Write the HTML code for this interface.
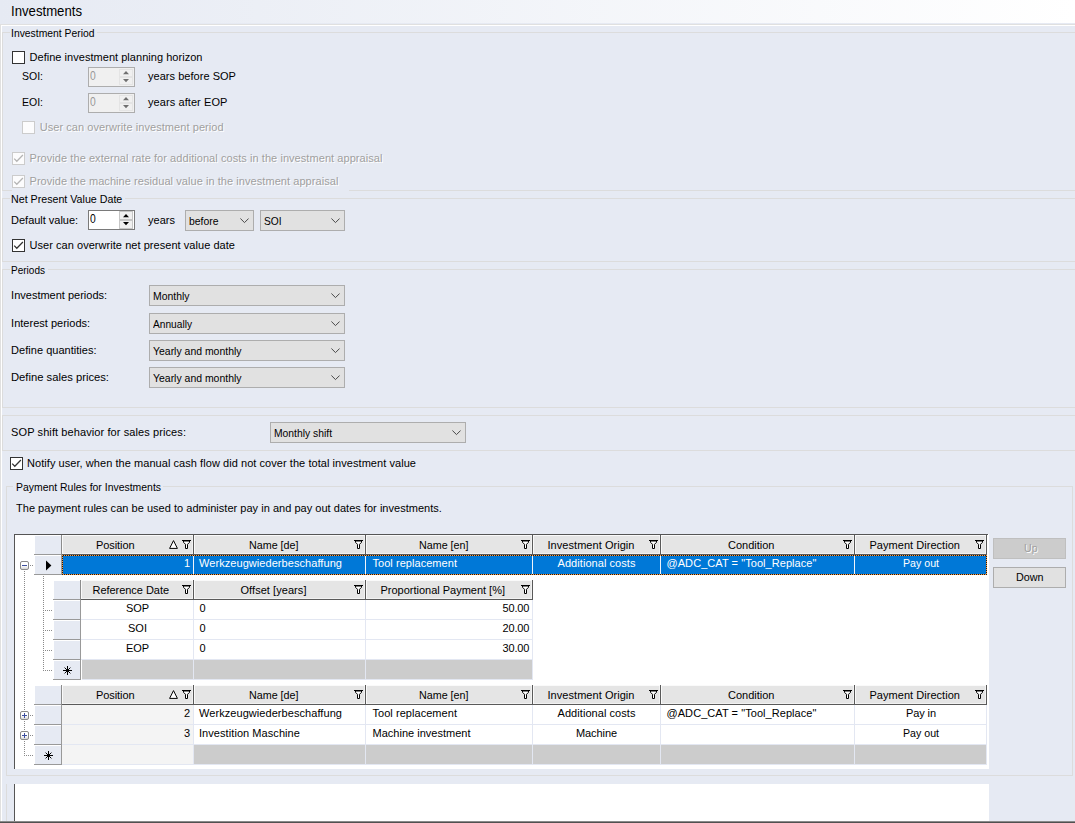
<!DOCTYPE html>
<html lang="en"><head><meta charset="utf-8"><title>Investments</title>
<style>
html,body{margin:0;padding:0;}
body{width:1075px;height:823px;overflow:hidden;background:#e6eaf3;font-family:"Liberation Sans",sans-serif;font-size:11px;color:#000;}
#root{position:relative;width:1075px;height:823px;overflow:hidden;background:#e6eaf3;}
#root div,#root span.t,#root svg{position:absolute;box-sizing:border-box;}
span.t{white-space:pre;}
span.dis{color:#a0a0a0;text-shadow:1px 1px 0 #fff;}

</style></head>
<body>
<div id="root">
<div style="left:0px;top:0px;width:1075px;height:23px;background:linear-gradient(90deg,#e6eaf3 0%,#ffffff 100%);"></div>
<span class="t" style="left:11.10px;top:2.65px;font-size:14px;line-height:17px;transform:scaleX(0.9406);transform-origin:0 0;">Investments</span>
<div style="left:0px;top:24px;width:1075px;height:1px;background:#e0e0e0;"></div>
<div style="left:0px;top:24px;width:1px;height:799px;background:#e0e0e0;"></div>
<div style="left:1px;top:25px;width:1074px;height:1px;background:#fff;"></div>
<div style="left:1px;top:25px;width:1px;height:798px;background:#fff;"></div>
<div style="left:2px;top:32px;width:1px;height:159px;background:#dcdcdc;"></div>
<div style="left:2px;top:198px;width:1px;height:64px;background:#dcdcdc;"></div>
<div style="left:2px;top:269px;width:1px;height:139px;background:#dcdcdc;"></div>
<div style="left:2px;top:415px;width:1px;height:36px;background:#dcdcdc;"></div>
<div style="left:2px;top:32px;width:8px;height:1px;background:#dcdcdc;"></div>
<div style="left:97px;top:32px;width:978px;height:1px;background:#dcdcdc;"></div>
<span class="t" style="left:11.10px;top:26.69px;font-size:11px;line-height:13px;transform:scaleX(0.9418);transform-origin:0 0;">Investment Period</span>
<div style="left:12px;top:51px;width:13px;height:13px;border:1px solid #333;background:#fff;"></div>
<span class="t" style="left:29.50px;top:50.69px;font-size:11px;line-height:13px;letter-spacing:0.034px;">Define investment planning horizon</span>
<span class="t" style="left:21.50px;top:69.69px;font-size:11px;line-height:13px;transform:scaleX(0.9539);transform-origin:0 0;">SOI:</span>
<div style="left:88px;top:67px;width:47px;height:20px;border:1px solid #adadad;background:#f0f0f0;"></div>
<div style="left:119px;top:69px;width:14px;height:8px;background:#f0f0f0;border:1px solid #e4e4e4;"></div>
<div style="left:119px;top:77px;width:14px;height:8px;background:#f0f0f0;border:1px solid #e4e4e4;"></div>
<svg style="left:119px;top:69px" width="14" height="16" viewBox="0 0 14 16"><path d="M4 5.2 L7 2 L10 5.2 Z M4 10 L7 13.2 L10 10 Z" fill="#707070"/></svg>
<span class="t" style="left:90.30px;top:68.84px;font-size:12px;line-height:14px;color:#989898;transform:scaleX(0.86);transform-origin:0 0;">0</span>
<span class="t" style="left:148.00px;top:69.69px;font-size:11px;line-height:13px;letter-spacing:0.035px;">years before SOP</span>
<span class="t" style="left:21.50px;top:95.69px;font-size:11px;line-height:13px;transform:scaleX(0.9539);transform-origin:0 0;">EOI:</span>
<div style="left:88px;top:93px;width:47px;height:20px;border:1px solid #adadad;background:#f0f0f0;"></div>
<div style="left:119px;top:95px;width:14px;height:8px;background:#f0f0f0;border:1px solid #e4e4e4;"></div>
<div style="left:119px;top:103px;width:14px;height:8px;background:#f0f0f0;border:1px solid #e4e4e4;"></div>
<svg style="left:119px;top:95px" width="14" height="16" viewBox="0 0 14 16"><path d="M4 5.2 L7 2 L10 5.2 Z M4 10 L7 13.2 L10 10 Z" fill="#707070"/></svg>
<span class="t" style="left:90.30px;top:94.84px;font-size:12px;line-height:14px;color:#989898;transform:scaleX(0.86);transform-origin:0 0;">0</span>
<span class="t" style="left:148.00px;top:95.69px;font-size:11px;line-height:13px;letter-spacing:0.082px;">years after EOP</span>
<div style="left:22px;top:121px;width:13px;height:13px;border:1px solid #cccccc;background:#fcfcfd;"></div>
<span class="t dis" style="left:39.70px;top:120.69px;font-size:11px;line-height:13px;letter-spacing:0.067px;">User can overwrite investment period</span>
<div style="left:12px;top:152px;width:13px;height:13px;border:1px solid #cccccc;background:#fcfcfd;"></div>
<svg style="left:12px;top:152px" width="13" height="13" viewBox="0 0 13 13"><path d="M2.2 6.6 L4.8 9.3 L10.9 3.0" fill="none" stroke="#b4b4b4" stroke-width="1.25"/></svg>
<span class="t dis" style="left:29.50px;top:151.69px;font-size:11px;line-height:13px;letter-spacing:0.060px;">Provide the external rate for additional costs in the investment appraisal</span>
<div style="left:12px;top:175px;width:13px;height:13px;border:1px solid #cccccc;background:#fcfcfd;"></div>
<svg style="left:12px;top:175px" width="13" height="13" viewBox="0 0 13 13"><path d="M2.2 6.6 L4.8 9.3 L10.9 3.0" fill="none" stroke="#b4b4b4" stroke-width="1.25"/></svg>
<span class="t dis" style="left:29.50px;top:174.69px;font-size:11px;line-height:13px;letter-spacing:0.062px;">Provide the machine residual value in the investment appraisal</span>
<div style="left:2px;top:190px;width:10px;height:1px;background:#dcdcdc;"></div>
<div style="left:349px;top:190px;width:726px;height:1px;background:#dcdcdc;"></div>
<div style="left:2px;top:198px;width:8px;height:1px;background:#dcdcdc;"></div>
<div style="left:125px;top:198px;width:950px;height:1px;background:#dcdcdc;"></div>
<span class="t" style="left:11.10px;top:192.69px;font-size:11px;line-height:13px;transform:scaleX(0.9699);transform-origin:0 0;">Net Present Value Date</span>
<span class="t" style="left:11.10px;top:213.69px;font-size:11px;line-height:13px;letter-spacing:-0.019px;">Default value:</span>
<div style="left:88px;top:210px;width:47px;height:20px;border:1px solid #7a7a7a;background:#fff;"></div>
<div style="left:119px;top:211px;width:14px;height:9px;background:#f0f0f0;border:1px solid #c6c6c6;"></div>
<div style="left:119px;top:220px;width:14px;height:9px;background:#f0f0f0;border:1px solid #c6c6c6;"></div>
<svg style="left:119px;top:212px" width="14" height="16" viewBox="0 0 14 16"><path d="M4 5.2 L7 2 L10 5.2 Z M4 10 L7 13.2 L10 10 Z" fill="#000"/></svg>
<span class="t" style="left:90.30px;top:211.84px;font-size:12px;line-height:14px;transform:scaleX(0.86);transform-origin:0 0;">0</span>
<span class="t" style="left:148.00px;top:213.69px;font-size:11px;line-height:13px;letter-spacing:0.019px;">years</span>
<div style="left:185px;top:210px;width:69px;height:21px;border:1px solid #adadad;background:#e1e1e1;"></div>
<span class="t" style="left:188.70px;top:214.69px;font-size:11px;line-height:13px;transform:scaleX(0.9454);transform-origin:0 0;">before</span>
<svg style="left:240px;top:218px" width="9" height="6" viewBox="0 0 9 6"><path d="M0.4 0.5 L4.5 4.6 L8.6 0.5" fill="none" stroke="#484848" stroke-width="1"/></svg>
<div style="left:260px;top:210px;width:85px;height:21px;border:1px solid #adadad;background:#e1e1e1;"></div>
<span class="t" style="left:263.70px;top:214.69px;font-size:11px;line-height:13px;transform:scaleX(0.9286);transform-origin:0 0;">SOI</span>
<svg style="left:331px;top:218px" width="9" height="6" viewBox="0 0 9 6"><path d="M0.4 0.5 L4.5 4.6 L8.6 0.5" fill="none" stroke="#484848" stroke-width="1"/></svg>
<div style="left:12px;top:239px;width:13px;height:13px;border:1px solid #333;background:#fff;"></div>
<svg style="left:12px;top:239px" width="13" height="13" viewBox="0 0 13 13"><path d="M2.2 6.6 L4.8 9.3 L10.9 3.0" fill="none" stroke="#333" stroke-width="1.25"/></svg>
<span class="t" style="left:29.50px;top:238.69px;font-size:11px;line-height:13px;letter-spacing:0.046px;">User can overwrite net present value date</span>
<div style="left:2px;top:261px;width:1073px;height:1px;background:#dcdcdc;"></div>
<div style="left:2px;top:269px;width:8px;height:1px;background:#dcdcdc;"></div>
<div style="left:48px;top:269px;width:1027px;height:1px;background:#dcdcdc;"></div>
<span class="t" style="left:11.10px;top:263.69px;font-size:11px;line-height:13px;transform:scaleX(0.9116);transform-origin:0 0;">Periods</span>
<span class="t" style="left:11.10px;top:288.69px;font-size:11px;line-height:13px;">Investment periods:</span>
<div style="left:149px;top:285px;width:196px;height:21px;border:1px solid #adadad;background:#e1e1e1;"></div>
<span class="t" style="left:152.70px;top:289.69px;font-size:11px;line-height:13px;transform:scaleX(0.9473);transform-origin:0 0;">Monthly</span>
<svg style="left:331px;top:293px" width="9" height="6" viewBox="0 0 9 6"><path d="M0.4 0.5 L4.5 4.6 L8.6 0.5" fill="none" stroke="#484848" stroke-width="1"/></svg>
<span class="t" style="left:11.10px;top:316.69px;font-size:11px;line-height:13px;letter-spacing:0.007px;">Interest periods:</span>
<div style="left:149px;top:313px;width:196px;height:21px;border:1px solid #adadad;background:#e1e1e1;"></div>
<span class="t" style="left:152.70px;top:317.69px;font-size:11px;line-height:13px;transform:scaleX(0.9241);transform-origin:0 0;">Annually</span>
<svg style="left:331px;top:321px" width="9" height="6" viewBox="0 0 9 6"><path d="M0.4 0.5 L4.5 4.6 L8.6 0.5" fill="none" stroke="#484848" stroke-width="1"/></svg>
<span class="t" style="left:11.10px;top:343.69px;font-size:11px;line-height:13px;letter-spacing:0.028px;">Define quantities:</span>
<div style="left:149px;top:340px;width:196px;height:21px;border:1px solid #adadad;background:#e1e1e1;"></div>
<span class="t" style="left:152.70px;top:344.69px;font-size:11px;line-height:13px;transform:scaleX(0.95);transform-origin:0 0;">Yearly and monthly</span>
<svg style="left:331px;top:348px" width="9" height="6" viewBox="0 0 9 6"><path d="M0.4 0.5 L4.5 4.6 L8.6 0.5" fill="none" stroke="#484848" stroke-width="1"/></svg>
<span class="t" style="left:11.10px;top:370.69px;font-size:11px;line-height:13px;transform:scaleX(1.0208);transform-origin:0 0;">Define sales prices:</span>
<div style="left:149px;top:367px;width:196px;height:21px;border:1px solid #adadad;background:#e1e1e1;"></div>
<span class="t" style="left:152.70px;top:371.69px;font-size:11px;line-height:13px;transform:scaleX(0.95);transform-origin:0 0;">Yearly and monthly</span>
<svg style="left:331px;top:375px" width="9" height="6" viewBox="0 0 9 6"><path d="M0.4 0.5 L4.5 4.6 L8.6 0.5" fill="none" stroke="#484848" stroke-width="1"/></svg>
<div style="left:2px;top:407px;width:1073px;height:1px;background:#dcdcdc;"></div>
<div style="left:2px;top:415px;width:1073px;height:1px;background:#dcdcdc;"></div>
<div style="left:2px;top:450px;width:1073px;height:1px;background:#dcdcdc;"></div>
<span class="t" style="left:11.10px;top:425.69px;font-size:11px;line-height:13px;letter-spacing:0.094px;">SOP shift behavior for sales prices:</span>
<div style="left:270px;top:422px;width:196px;height:21px;border:1px solid #adadad;background:#e1e1e1;"></div>
<span class="t" style="left:273.70px;top:426.69px;font-size:11px;line-height:13px;transform:scaleX(0.9393);transform-origin:0 0;">Monthly shift</span>
<svg style="left:452px;top:430px" width="9" height="6" viewBox="0 0 9 6"><path d="M0.4 0.5 L4.5 4.6 L8.6 0.5" fill="none" stroke="#484848" stroke-width="1"/></svg>
<div style="left:10px;top:457px;width:13px;height:13px;border:1px solid #333;background:#fff;"></div>
<svg style="left:10px;top:457px" width="13" height="13" viewBox="0 0 13 13"><path d="M2.2 6.6 L4.8 9.3 L10.9 3.0" fill="none" stroke="#333" stroke-width="1.25"/></svg>
<span class="t" style="left:27.00px;top:456.69px;font-size:11px;line-height:13px;letter-spacing:0.056px;">Notify user, when the manual cash flow did not cover the total investment value</span>
<div style="left:6px;top:486px;width:7px;height:1px;background:#dcdcdc;"></div>
<div style="left:163px;top:486px;width:910px;height:1px;background:#dcdcdc;"></div>
<div style="left:6px;top:486px;width:1px;height:290px;background:#dcdcdc;"></div>
<div style="left:1072px;top:486px;width:1px;height:290px;background:#dcdcdc;"></div>
<div style="left:6px;top:775px;width:1067px;height:1px;background:#dcdcdc;"></div>
<div style="left:6px;top:784px;width:1px;height:37px;background:#dcdcdc;"></div>
<span class="t" style="left:15.50px;top:480.69px;font-size:11px;line-height:13px;transform:scaleX(0.9487);transform-origin:0 0;">Payment Rules for Investments</span>
<span class="t" style="left:16.00px;top:501.69px;font-size:11px;line-height:13px;letter-spacing:0.026px;">The payment rules can be used to administer pay in and pay out dates for investments.</span>
<div style="left:14px;top:534px;width:975px;height:235px;background:#fff;border-left:1px solid #555;"></div>
<div style="left:14px;top:534px;width:974px;height:1px;background:#555;"></div>
<div style="left:24px;top:571px;width:1px;height:185px;background:repeating-linear-gradient(180deg,#8a8a8a 0 1px,transparent 1px 2px);"></div>
<div style="left:24px;top:755px;width:10px;height:1px;background:repeating-linear-gradient(90deg,#8a8a8a 0 1px,transparent 1px 2px);"></div>
<div style="left:43px;top:576px;width:1px;height:95px;background:repeating-linear-gradient(180deg,#8a8a8a 0 1px,transparent 1px 2px);"></div>
<div style="left:43px;top:610px;width:11px;height:1px;background:repeating-linear-gradient(90deg,#8a8a8a 0 1px,transparent 1px 2px);"></div>
<div style="left:43px;top:630px;width:11px;height:1px;background:repeating-linear-gradient(90deg,#8a8a8a 0 1px,transparent 1px 2px);"></div>
<div style="left:43px;top:650px;width:11px;height:1px;background:repeating-linear-gradient(90deg,#8a8a8a 0 1px,transparent 1px 2px);"></div>
<div style="left:43px;top:670px;width:11px;height:1px;background:repeating-linear-gradient(90deg,#8a8a8a 0 1px,transparent 1px 2px);"></div>
<div style="left:34px;top:535px;width:27px;height:20px;background:#e6eaf3;box-shadow:inset 0 -1px 0 #999999,inset 1px 1px 0 #fff;"></div>
<div style="left:62px;top:535px;width:132px;height:20px;background:#e5e5e5;box-shadow:inset -1px -1px 0 #5a5a5a,inset 1px 1px 0 #fafafa,inset -2px -2px 0 #f2f2f2;"></div>
<span class="t" style="left:96.00px;top:538.69px;font-size:11px;line-height:13px;letter-spacing:-0.080px;">Position</span>
<svg style="left:182px;top:540px" width="9" height="9" viewBox="0 0 9 9"><path d="M1.5 1 V2.3 L3.5 4.3 V8.5 H5.5 V4.3 L7.5 2.3 V1 Z" fill="#fff" stroke="#000" stroke-width="1"/><path d="M0 0.5 H9" stroke="#000" stroke-width="1"/></svg>
<svg style="left:169px;top:540px" width="9" height="9" viewBox="0 0 9 9"><path d="M4.5 0.6 L8.4 8.4 H0.6 Z" fill="#fff" stroke="#000" stroke-width="1"/></svg>
<div style="left:194px;top:535px;width:172px;height:20px;background:#e5e5e5;box-shadow:inset -1px -1px 0 #5a5a5a,inset 1px 1px 0 #fafafa,inset -2px -2px 0 #f2f2f2;"></div>
<span class="t" style="left:248.50px;top:538.69px;font-size:11px;line-height:13px;transform:scaleX(0.9754);transform-origin:0 0;">Name [de]</span>
<svg style="left:354px;top:540px" width="9" height="9" viewBox="0 0 9 9"><path d="M1.5 1 V2.3 L3.5 4.3 V8.5 H5.5 V4.3 L7.5 2.3 V1 Z" fill="#fff" stroke="#000" stroke-width="1"/><path d="M0 0.5 H9" stroke="#000" stroke-width="1"/></svg>
<div style="left:366px;top:535px;width:167px;height:20px;background:#e5e5e5;box-shadow:inset -1px -1px 0 #5a5a5a,inset 1px 1px 0 #fafafa,inset -2px -2px 0 #f2f2f2;"></div>
<span class="t" style="left:418.50px;top:538.69px;font-size:11px;line-height:13px;transform:scaleX(0.9754);transform-origin:0 0;">Name [en]</span>
<svg style="left:521px;top:540px" width="9" height="9" viewBox="0 0 9 9"><path d="M1.5 1 V2.3 L3.5 4.3 V8.5 H5.5 V4.3 L7.5 2.3 V1 Z" fill="#fff" stroke="#000" stroke-width="1"/><path d="M0 0.5 H9" stroke="#000" stroke-width="1"/></svg>
<div style="left:533px;top:535px;width:128px;height:20px;background:#e5e5e5;box-shadow:inset -1px -1px 0 #5a5a5a,inset 1px 1px 0 #fafafa,inset -2px -2px 0 #f2f2f2;"></div>
<span class="t" style="left:547.50px;top:538.69px;font-size:11px;line-height:13px;letter-spacing:0.047px;">Investment Origin</span>
<svg style="left:649px;top:540px" width="9" height="9" viewBox="0 0 9 9"><path d="M1.5 1 V2.3 L3.5 4.3 V8.5 H5.5 V4.3 L7.5 2.3 V1 Z" fill="#fff" stroke="#000" stroke-width="1"/><path d="M0 0.5 H9" stroke="#000" stroke-width="1"/></svg>
<div style="left:661px;top:535px;width:194px;height:20px;background:#e5e5e5;box-shadow:inset -1px -1px 0 #5a5a5a,inset 1px 1px 0 #fafafa,inset -2px -2px 0 #f2f2f2;"></div>
<span class="t" style="left:728.00px;top:538.69px;font-size:11px;line-height:13px;letter-spacing:0.002px;">Condition</span>
<svg style="left:843px;top:540px" width="9" height="9" viewBox="0 0 9 9"><path d="M1.5 1 V2.3 L3.5 4.3 V8.5 H5.5 V4.3 L7.5 2.3 V1 Z" fill="#fff" stroke="#000" stroke-width="1"/><path d="M0 0.5 H9" stroke="#000" stroke-width="1"/></svg>
<div style="left:855px;top:535px;width:132px;height:20px;background:#e5e5e5;box-shadow:inset -1px -1px 0 #5a5a5a,inset 1px 1px 0 #fafafa,inset -2px -2px 0 #f2f2f2;"></div>
<span class="t" style="left:869.50px;top:538.69px;font-size:11px;line-height:13px;letter-spacing:0.037px;">Payment Direction</span>
<svg style="left:975px;top:540px" width="9" height="9" viewBox="0 0 9 9"><path d="M1.5 1 V2.3 L3.5 4.3 V8.5 H5.5 V4.3 L7.5 2.3 V1 Z" fill="#fff" stroke="#000" stroke-width="1"/><path d="M0 0.5 H9" stroke="#000" stroke-width="1"/></svg>
<div style="left:61px;top:535px;width:1px;height:20px;background:#8c8c8c;"></div>
<div style="left:34px;top:555px;width:28px;height:20px;background:#e6eaf3;box-shadow:inset -1px -1px 0 #999999,inset 1px 1px 0 #fff;"></div>
<svg style="left:46px;top:560px" width="6" height="11" viewBox="0 0 6 11"><path d="M0 0.4 L5.4 5.5 L0 10.6 Z" fill="#000"/></svg>
<div style="left:62px;top:555px;width:132px;height:20px;background:#0078d7;border-right:1px solid #f0f4fa;"></div>
<div style="left:194px;top:555px;width:172px;height:20px;background:#0078d7;border-right:1px solid #f0f4fa;"></div>
<div style="left:366px;top:555px;width:167px;height:20px;background:#0078d7;border-right:1px solid #f0f4fa;"></div>
<div style="left:533px;top:555px;width:128px;height:20px;background:#0078d7;border-right:1px solid #f0f4fa;"></div>
<div style="left:661px;top:555px;width:194px;height:20px;background:#0078d7;border-right:1px solid #f0f4fa;"></div>
<div style="left:855px;top:555px;width:132px;height:20px;background:#0078d7;border-right:1px solid #f0f4fa;"></div>
<span class="t" style="left:183.88px;top:556.69px;font-size:11px;line-height:13px;color:#fff;">1</span>
<span class="t" style="left:199.00px;top:556.69px;font-size:11px;line-height:13px;letter-spacing:0.061px;color:#fff;">Werkzeugwiederbeschaffung</span>
<span class="t" style="left:372.50px;top:556.69px;font-size:11px;line-height:13px;letter-spacing:0.045px;color:#fff;">Tool replacement</span>
<span class="t" style="left:557.53px;top:556.69px;font-size:11px;line-height:13px;letter-spacing:0.060px;color:#fff;">Additional costs</span>
<span class="t" style="left:666.50px;top:556.69px;font-size:11px;line-height:13px;letter-spacing:0.060px;color:#fff;">@ADC_CAT = &quot;Tool_Replace&quot;</span>
<span class="t" style="left:903.00px;top:556.69px;font-size:11px;line-height:13px;color:#fff;transform:scaleX(0.9648);transform-origin:0 0;">Pay out</span>
<div style="left:62px;top:555px;width:925px;height:1px;background:repeating-linear-gradient(90deg,#ff9a3c 0 1px,#1a1a1a 1px 2px);"></div>
<div style="left:62px;top:574px;width:925px;height:1px;background:repeating-linear-gradient(90deg,#1a1a1a 0 1px,#ff9a3c 1px 2px);"></div>
<div style="left:62px;top:555px;width:1px;height:20px;background:repeating-linear-gradient(180deg,#ff9a3c 0 1px,#1a1a1a 1px 2px);"></div>
<div style="left:986px;top:555px;width:1px;height:20px;background:repeating-linear-gradient(180deg,#ff9a3c 0 1px,#1a1a1a 1px 2px);"></div>
<div style="left:30px;top:565px;width:4px;height:1px;background:repeating-linear-gradient(90deg,#8a8a8a 0 1px,transparent 1px 2px);"></div>
<div style="left:20px;top:561px;width:9px;height:9px;border:1px solid #8a8a8a;border-radius:2px;background:linear-gradient(180deg,#fff 0%,#fff 50%,#d8d8d8 100%);"></div>
<div style="left:22px;top:565px;width:5px;height:1px;background:#3c4fa0;"></div>
<div style="left:53px;top:580px;width:27px;height:20px;background:#e6eaf3;box-shadow:inset 0 -1px 0 #999999,inset 1px 1px 0 #fff;"></div>
<div style="left:81px;top:580px;width:113px;height:20px;background:#e5e5e5;box-shadow:inset -1px -1px 0 #5a5a5a,inset 1px 1px 0 #fafafa,inset -2px -2px 0 #f2f2f2;"></div>
<span class="t" style="left:92.50px;top:583.69px;font-size:11px;line-height:13px;letter-spacing:-0.039px;">Reference Date</span>
<svg style="left:182px;top:585px" width="9" height="9" viewBox="0 0 9 9"><path d="M1.5 1 V2.3 L3.5 4.3 V8.5 H5.5 V4.3 L7.5 2.3 V1 Z" fill="#fff" stroke="#000" stroke-width="1"/><path d="M0 0.5 H9" stroke="#000" stroke-width="1"/></svg>
<div style="left:194px;top:580px;width:172px;height:20px;background:#e5e5e5;box-shadow:inset -1px -1px 0 #5a5a5a,inset 1px 1px 0 #fafafa,inset -2px -2px 0 #f2f2f2;"></div>
<span class="t" style="left:240.50px;top:583.69px;font-size:11px;line-height:13px;letter-spacing:0.056px;">Offset [years]</span>
<svg style="left:354px;top:585px" width="9" height="9" viewBox="0 0 9 9"><path d="M1.5 1 V2.3 L3.5 4.3 V8.5 H5.5 V4.3 L7.5 2.3 V1 Z" fill="#fff" stroke="#000" stroke-width="1"/><path d="M0 0.5 H9" stroke="#000" stroke-width="1"/></svg>
<div style="left:366px;top:580px;width:167px;height:20px;background:#e5e5e5;box-shadow:inset -1px -1px 0 #5a5a5a,inset 1px 1px 0 #fafafa,inset -2px -2px 0 #f2f2f2;"></div>
<span class="t" style="left:380.50px;top:583.69px;font-size:11px;line-height:13px;letter-spacing:-0.010px;">Proportional Payment [%]</span>
<svg style="left:521px;top:585px" width="9" height="9" viewBox="0 0 9 9"><path d="M1.5 1 V2.3 L3.5 4.3 V8.5 H5.5 V4.3 L7.5 2.3 V1 Z" fill="#fff" stroke="#000" stroke-width="1"/><path d="M0 0.5 H9" stroke="#000" stroke-width="1"/></svg>
<div style="left:80px;top:580px;width:1px;height:20px;background:#8c8c8c;"></div>
<div style="left:53px;top:600px;width:28px;height:20px;background:#e6eaf3;box-shadow:inset -1px -1px 0 #999999,inset 1px 1px 0 #fff;"></div>
<div style="left:81px;top:600px;width:113px;height:20px;background:#fff;border-right:1px solid #e3e7f2;border-bottom:1px solid #e3e7f2;"></div>
<div style="left:194px;top:600px;width:172px;height:20px;background:#fff;border-right:1px solid #e3e7f2;border-bottom:1px solid #e3e7f2;"></div>
<div style="left:366px;top:600px;width:167px;height:20px;background:#fff;border-right:1px solid #e3e7f2;border-bottom:1px solid #e3e7f2;"></div>
<span class="t" style="left:125.88px;top:601.69px;font-size:11px;line-height:13px;">SOP</span>
<span class="t" style="left:199.50px;top:601.69px;font-size:11px;line-height:13px;">0</span>
<span class="t" style="left:502.39px;top:601.69px;font-size:11px;line-height:13px;letter-spacing:-0.106px;">50.00</span>
<div style="left:53px;top:620px;width:28px;height:20px;background:#e6eaf3;box-shadow:inset -1px -1px 0 #999999,inset 1px 1px 0 #fff;"></div>
<div style="left:81px;top:620px;width:113px;height:20px;background:#fff;border-right:1px solid #e3e7f2;border-bottom:1px solid #e3e7f2;"></div>
<div style="left:194px;top:620px;width:172px;height:20px;background:#fff;border-right:1px solid #e3e7f2;border-bottom:1px solid #e3e7f2;"></div>
<div style="left:366px;top:620px;width:167px;height:20px;background:#fff;border-right:1px solid #e3e7f2;border-bottom:1px solid #e3e7f2;"></div>
<span class="t" style="left:128.02px;top:621.69px;font-size:11px;line-height:13px;">SOI</span>
<span class="t" style="left:199.50px;top:621.69px;font-size:11px;line-height:13px;">0</span>
<span class="t" style="left:502.39px;top:621.69px;font-size:11px;line-height:13px;letter-spacing:-0.106px;">20.00</span>
<div style="left:53px;top:640px;width:28px;height:20px;background:#e6eaf3;box-shadow:inset -1px -1px 0 #999999,inset 1px 1px 0 #fff;"></div>
<div style="left:81px;top:640px;width:113px;height:20px;background:#fff;border-right:1px solid #e3e7f2;border-bottom:1px solid #e3e7f2;"></div>
<div style="left:194px;top:640px;width:172px;height:20px;background:#fff;border-right:1px solid #e3e7f2;border-bottom:1px solid #e3e7f2;"></div>
<div style="left:366px;top:640px;width:167px;height:20px;background:#fff;border-right:1px solid #e3e7f2;border-bottom:1px solid #e3e7f2;"></div>
<span class="t" style="left:125.88px;top:641.69px;font-size:11px;line-height:13px;">EOP</span>
<span class="t" style="left:199.50px;top:641.69px;font-size:11px;line-height:13px;">0</span>
<span class="t" style="left:502.39px;top:641.69px;font-size:11px;line-height:13px;letter-spacing:-0.106px;">30.00</span>
<div style="left:53px;top:660px;width:28px;height:20px;background:#e6eaf3;box-shadow:inset -1px -1px 0 #999999,inset 1px 1px 0 #fff;"></div>
<svg style="left:63px;top:666px" width="9" height="9" viewBox="0 0 9 9"><path d="M4.5 0 V9 M0 4.5 H9 M1.6 1.6 L7.4 7.4 M7.4 1.6 L1.6 7.4" stroke="#000" stroke-width="1" fill="none"/><circle cx="4.5" cy="4.5" r="1.5" fill="#000"/></svg>
<div style="left:82px;top:660px;width:112px;height:20px;background:#cccccc;border-right:1px solid #e3e7f2;border-bottom:1px solid #e3e7f2;"></div>
<div style="left:194px;top:660px;width:172px;height:20px;background:#cccccc;border-right:1px solid #e3e7f2;border-bottom:1px solid #e3e7f2;"></div>
<div style="left:366px;top:660px;width:167px;height:20px;background:#cccccc;border-right:1px solid #e3e7f2;border-bottom:1px solid #e3e7f2;"></div>
<div style="left:34px;top:685px;width:27px;height:20px;background:#e6eaf3;box-shadow:inset 0 -1px 0 #999999,inset 1px 1px 0 #fff;"></div>
<div style="left:62px;top:685px;width:132px;height:20px;background:#e5e5e5;box-shadow:inset -1px -1px 0 #5a5a5a,inset 1px 1px 0 #fafafa,inset -2px -2px 0 #f2f2f2;"></div>
<span class="t" style="left:96.00px;top:688.69px;font-size:11px;line-height:13px;letter-spacing:-0.080px;">Position</span>
<svg style="left:182px;top:690px" width="9" height="9" viewBox="0 0 9 9"><path d="M1.5 1 V2.3 L3.5 4.3 V8.5 H5.5 V4.3 L7.5 2.3 V1 Z" fill="#fff" stroke="#000" stroke-width="1"/><path d="M0 0.5 H9" stroke="#000" stroke-width="1"/></svg>
<svg style="left:169px;top:690px" width="9" height="9" viewBox="0 0 9 9"><path d="M4.5 0.6 L8.4 8.4 H0.6 Z" fill="#fff" stroke="#000" stroke-width="1"/></svg>
<div style="left:194px;top:685px;width:172px;height:20px;background:#e5e5e5;box-shadow:inset -1px -1px 0 #5a5a5a,inset 1px 1px 0 #fafafa,inset -2px -2px 0 #f2f2f2;"></div>
<span class="t" style="left:248.50px;top:688.69px;font-size:11px;line-height:13px;transform:scaleX(0.9754);transform-origin:0 0;">Name [de]</span>
<svg style="left:354px;top:690px" width="9" height="9" viewBox="0 0 9 9"><path d="M1.5 1 V2.3 L3.5 4.3 V8.5 H5.5 V4.3 L7.5 2.3 V1 Z" fill="#fff" stroke="#000" stroke-width="1"/><path d="M0 0.5 H9" stroke="#000" stroke-width="1"/></svg>
<div style="left:366px;top:685px;width:167px;height:20px;background:#e5e5e5;box-shadow:inset -1px -1px 0 #5a5a5a,inset 1px 1px 0 #fafafa,inset -2px -2px 0 #f2f2f2;"></div>
<span class="t" style="left:418.50px;top:688.69px;font-size:11px;line-height:13px;transform:scaleX(0.9754);transform-origin:0 0;">Name [en]</span>
<svg style="left:521px;top:690px" width="9" height="9" viewBox="0 0 9 9"><path d="M1.5 1 V2.3 L3.5 4.3 V8.5 H5.5 V4.3 L7.5 2.3 V1 Z" fill="#fff" stroke="#000" stroke-width="1"/><path d="M0 0.5 H9" stroke="#000" stroke-width="1"/></svg>
<div style="left:533px;top:685px;width:128px;height:20px;background:#e5e5e5;box-shadow:inset -1px -1px 0 #5a5a5a,inset 1px 1px 0 #fafafa,inset -2px -2px 0 #f2f2f2;"></div>
<span class="t" style="left:547.50px;top:688.69px;font-size:11px;line-height:13px;letter-spacing:0.047px;">Investment Origin</span>
<svg style="left:649px;top:690px" width="9" height="9" viewBox="0 0 9 9"><path d="M1.5 1 V2.3 L3.5 4.3 V8.5 H5.5 V4.3 L7.5 2.3 V1 Z" fill="#fff" stroke="#000" stroke-width="1"/><path d="M0 0.5 H9" stroke="#000" stroke-width="1"/></svg>
<div style="left:661px;top:685px;width:194px;height:20px;background:#e5e5e5;box-shadow:inset -1px -1px 0 #5a5a5a,inset 1px 1px 0 #fafafa,inset -2px -2px 0 #f2f2f2;"></div>
<span class="t" style="left:728.00px;top:688.69px;font-size:11px;line-height:13px;letter-spacing:0.002px;">Condition</span>
<svg style="left:843px;top:690px" width="9" height="9" viewBox="0 0 9 9"><path d="M1.5 1 V2.3 L3.5 4.3 V8.5 H5.5 V4.3 L7.5 2.3 V1 Z" fill="#fff" stroke="#000" stroke-width="1"/><path d="M0 0.5 H9" stroke="#000" stroke-width="1"/></svg>
<div style="left:855px;top:685px;width:132px;height:20px;background:#e5e5e5;box-shadow:inset -1px -1px 0 #5a5a5a,inset 1px 1px 0 #fafafa,inset -2px -2px 0 #f2f2f2;"></div>
<span class="t" style="left:869.50px;top:688.69px;font-size:11px;line-height:13px;letter-spacing:0.037px;">Payment Direction</span>
<svg style="left:975px;top:690px" width="9" height="9" viewBox="0 0 9 9"><path d="M1.5 1 V2.3 L3.5 4.3 V8.5 H5.5 V4.3 L7.5 2.3 V1 Z" fill="#fff" stroke="#000" stroke-width="1"/><path d="M0 0.5 H9" stroke="#000" stroke-width="1"/></svg>
<div style="left:61px;top:685px;width:1px;height:20px;background:#8c8c8c;"></div>
<div style="left:34px;top:705px;width:28px;height:20px;background:#e6eaf3;box-shadow:inset -1px -1px 0 #999999,inset 1px 1px 0 #fff;"></div>
<div style="left:62px;top:705px;width:132px;height:20px;background:#f4f4f4;border-right:1px solid #e3e7f2;border-bottom:1px solid #e3e7f2;"></div>
<div style="left:194px;top:705px;width:172px;height:20px;background:#fff;border-right:1px solid #e3e7f2;border-bottom:1px solid #e3e7f2;"></div>
<div style="left:366px;top:705px;width:167px;height:20px;background:#fff;border-right:1px solid #e3e7f2;border-bottom:1px solid #e3e7f2;"></div>
<div style="left:533px;top:705px;width:128px;height:20px;background:#fff;border-right:1px solid #e3e7f2;border-bottom:1px solid #e3e7f2;"></div>
<div style="left:661px;top:705px;width:194px;height:20px;background:#fff;border-right:1px solid #e3e7f2;border-bottom:1px solid #e3e7f2;"></div>
<div style="left:855px;top:705px;width:132px;height:20px;background:#fff;border-right:1px solid #e3e7f2;border-bottom:1px solid #e3e7f2;"></div>
<span class="t" style="left:183.88px;top:706.69px;font-size:11px;line-height:13px;">2</span>
<span class="t" style="left:199.00px;top:706.69px;font-size:11px;line-height:13px;letter-spacing:0.061px;">Werkzeugwiederbeschaffung</span>
<span class="t" style="left:372.50px;top:706.69px;font-size:11px;line-height:13px;letter-spacing:0.045px;">Tool replacement</span>
<span class="t" style="left:557.53px;top:706.69px;font-size:11px;line-height:13px;letter-spacing:0.060px;">Additional costs</span>
<span class="t" style="left:666.50px;top:706.69px;font-size:11px;line-height:13px;letter-spacing:0.060px;">@ADC_CAT = &quot;Tool_Replace&quot;</span>
<span class="t" style="left:905.95px;top:706.69px;font-size:11px;line-height:13px;letter-spacing:-0.096px;">Pay in</span>
<div style="left:34px;top:725px;width:28px;height:20px;background:#e6eaf3;box-shadow:inset -1px -1px 0 #999999,inset 1px 1px 0 #fff;"></div>
<div style="left:62px;top:725px;width:132px;height:20px;background:#f4f4f4;border-right:1px solid #e3e7f2;border-bottom:1px solid #e3e7f2;"></div>
<div style="left:194px;top:725px;width:172px;height:20px;background:#fff;border-right:1px solid #e3e7f2;border-bottom:1px solid #e3e7f2;"></div>
<div style="left:366px;top:725px;width:167px;height:20px;background:#fff;border-right:1px solid #e3e7f2;border-bottom:1px solid #e3e7f2;"></div>
<div style="left:533px;top:725px;width:128px;height:20px;background:#fff;border-right:1px solid #e3e7f2;border-bottom:1px solid #e3e7f2;"></div>
<div style="left:661px;top:725px;width:194px;height:20px;background:#fff;border-right:1px solid #e3e7f2;border-bottom:1px solid #e3e7f2;"></div>
<div style="left:855px;top:725px;width:132px;height:20px;background:#fff;border-right:1px solid #e3e7f2;border-bottom:1px solid #e3e7f2;"></div>
<span class="t" style="left:183.88px;top:726.69px;font-size:11px;line-height:13px;">3</span>
<span class="t" style="left:199.00px;top:726.69px;font-size:11px;line-height:13px;letter-spacing:0.066px;">Investition Maschine</span>
<span class="t" style="left:372.50px;top:726.69px;font-size:11px;line-height:13px;letter-spacing:0.010px;">Machine investment</span>
<span class="t" style="left:575.96px;top:726.69px;font-size:11px;line-height:13px;letter-spacing:-0.083px;">Machine</span>
<span class="t" style="left:903.00px;top:726.69px;font-size:11px;line-height:13px;transform:scaleX(0.9648);transform-origin:0 0;">Pay out</span>
<div style="left:34px;top:745px;width:28px;height:20px;background:#e6eaf3;box-shadow:inset -1px -1px 0 #999999,inset 1px 1px 0 #fff;"></div>
<svg style="left:44px;top:751px" width="9" height="9" viewBox="0 0 9 9"><path d="M4.5 0 V9 M0 4.5 H9 M1.6 1.6 L7.4 7.4 M7.4 1.6 L1.6 7.4" stroke="#000" stroke-width="1" fill="none"/><circle cx="4.5" cy="4.5" r="1.5" fill="#000"/></svg>
<div style="left:62px;top:745px;width:132px;height:20px;background:#f4f4f4;border-right:1px solid #e3e7f2;border-bottom:1px solid #e3e7f2;"></div>
<div style="left:194px;top:745px;width:172px;height:20px;background:#cccccc;border-right:1px solid #e3e7f2;border-bottom:1px solid #e3e7f2;"></div>
<div style="left:366px;top:745px;width:167px;height:20px;background:#cccccc;border-right:1px solid #e3e7f2;border-bottom:1px solid #e3e7f2;"></div>
<div style="left:533px;top:745px;width:128px;height:20px;background:#cccccc;border-right:1px solid #e3e7f2;border-bottom:1px solid #e3e7f2;"></div>
<div style="left:661px;top:745px;width:194px;height:20px;background:#cccccc;border-right:1px solid #e3e7f2;border-bottom:1px solid #e3e7f2;"></div>
<div style="left:855px;top:745px;width:132px;height:20px;background:#cccccc;border-right:1px solid #e3e7f2;border-bottom:1px solid #e3e7f2;"></div>
<div style="left:30px;top:715px;width:4px;height:1px;background:repeating-linear-gradient(90deg,#8a8a8a 0 1px,transparent 1px 2px);"></div>
<div style="left:20px;top:711px;width:9px;height:9px;border:1px solid #8a8a8a;border-radius:2px;background:linear-gradient(180deg,#fff 0%,#fff 50%,#d8d8d8 100%);"></div>
<div style="left:22px;top:715px;width:5px;height:1px;background:#3c4fa0;"></div>
<div style="left:24px;top:713px;width:1px;height:5px;background:#3c4fa0;"></div>
<div style="left:30px;top:735px;width:4px;height:1px;background:repeating-linear-gradient(90deg,#8a8a8a 0 1px,transparent 1px 2px);"></div>
<div style="left:20px;top:731px;width:9px;height:9px;border:1px solid #8a8a8a;border-radius:2px;background:linear-gradient(180deg,#fff 0%,#fff 50%,#d8d8d8 100%);"></div>
<div style="left:22px;top:735px;width:5px;height:1px;background:#3c4fa0;"></div>
<div style="left:24px;top:733px;width:1px;height:5px;background:#3c4fa0;"></div>
<div style="left:14px;top:784px;width:975px;height:40px;background:#fff;border-left:1px solid #555;"></div>
<div style="left:0px;top:821px;width:1075px;height:1px;background:#8a8a8a;"></div>
<div style="left:0px;top:822px;width:1075px;height:1px;background:#505050;"></div>
<div style="left:993px;top:538px;width:73px;height:21px;background:#ccc;border:1px solid #bfbfbf;"></div>
<span class="t dis" style="left:1023.75px;top:541.69px;font-size:11px;line-height:13px;color:#a0a0a0;transform:scaleX(0.96);transform-origin:0 0;">Up</span>
<div style="left:993px;top:567px;width:73px;height:21px;background:#e1e1e1;border:1px solid #adadad;"></div>
<span class="t" style="left:1016.25px;top:570.69px;font-size:11px;line-height:13px;transform:scaleX(0.9778);transform-origin:0 0;">Down</span>
</div>
</body></html>
